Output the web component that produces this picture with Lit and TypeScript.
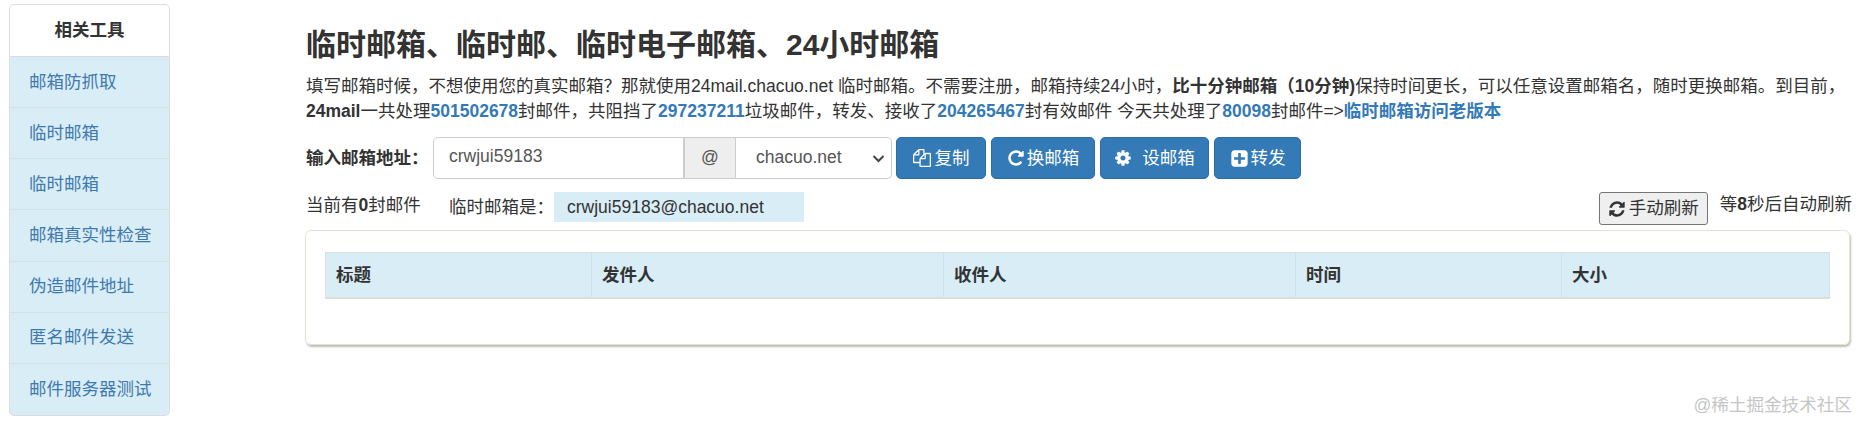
import { LitElement, html, css, svg } from "lit";
import { customElement } from "lit/decorators.js";

const icon = (d: string, cls = "ico") =>
  html`<svg class=${cls} viewBox="0 0 1792 1792" aria-hidden="true">${svg`<path fill="currentColor" d=${d}></path>`}</svg>`;

const filesD =
  "M1696 384q40 0 68 28t28 68v1216q0 40-28 68t-68 28h-960q-40 0-68-28t-28-68v-288h-544q-40 0-68-28t-28-68v-672q0-40 20-88t48-76l408-408q28-28 76-48t88-20h416q40 0 68 28t28 68v328q68-40 128-40h416zm-544 213l-299 299h299v-299zm-640-384l-299 299h299v-299zm196 647l316-316v-416h-384v416q0 40-28 68t-68 28h-416v640h512v-256q0-40 20-88t48-76zm956 804v-1152h-384v416q0 40-28 68t-68 28h-416v640h896z";
const repeatD =
  "M1664 256v448q0 26-19 45t-45 19h-448q-42 0-59-40-17-39 14-69l138-138q-148-137-349-137-104 0-198.5 40.5t-163.5 109.5-109.5 163.5-40.5 198.5 40.5 198.5 109.5 163.5 163.5 109.5 198.5 40.5q119 0 225-52t179-147q7-10 23-12 15 0 25 9l137 138q9 8 9.5 20.5t-7.5 22.5q-109 132-264 204.5t-327 72.5q-156 0-298-61t-245-164-164-245-61-298 61-298 164-245 245-164 298-61q147 0 284.5 55.5t244.5 156.5l130-129q29-31 70-14 39 17 39 59z";
const cogD =
  "M1152 896q0-106-75-181t-181-75-181 75-75 181 75 181 181 75 181-75 75-181zm512-109v222q0 12-8 23t-20 13l-185 28q-19 54-39 91 35 50 107 138 10 12 10 25t-9 23q-27 37-99 108t-94 71q-12 0-26-9l-138-108q-44 23-91 38-16 136-29 186-7 28-36 28h-222q-14 0-24.5-8.5t-11.5-21.5l-28-184q-49-16-90-37l-141 107q-10 9-25 9-14 0-25-11-126-114-165-168-7-10-7-23 0-12 8-23 15-21 51-66.5t54-70.5q-27-50-41-99l-183-27q-13-2-21-12.5t-8-23.5v-222q0-12 8-23t19-13l186-28q14-46 39-92-40-57-107-138-10-12-10-24 0-10 9-23 26-36 98.5-107.5t94.5-71.5q13 0 26 10l138 107q44-23 91-38 16-136 29-186 7-28 36-28h222q14 0 24.5 8.5t11.5 21.5l28 184q49 16 90 37l142-107q9-9 24-9 13 0 25 10 129 119 165 170 7 8 7 22 0 12-8 23-15 21-51 66.5t-54 70.5q26 50 41 98l183 28q13 2 21 12.5t8 23.5z";
const plusD =
  "M1408 960v-128q0-26-19-45t-45-19h-320v-320q0-26-19-45t-45-19h-128q-26 0-45 19t-19 45v320h-320q-26 0-45 19t-19 45v128q0 26 19 45t45 19h320v320q0 26 19 45t45 19h128q26 0 45-19t19-45v-320h320q26 0 45-19t19-45zm256-544v960q0 119-84.5 203.5t-203.5 84.5h-960q-119 0-203.5-84.5t-84.5-203.5v-960q0-119 84.5-203.5t203.5-84.5h960q119 0 203.5 84.5t84.5 203.5z";
const refreshD =
  "M1639 1056q0 5-1 7-64 268-268 434.5t-478 166.5q-146 0-282.5-55t-243.5-157l-129 129q-19 19-45 19t-45-19-19-45v-448q0-26 19-45t45-19h448q26 0 45 19t19 45-19 45l-137 137q71 66 161 102t187 36q134 0 250-65t186-179q11-17 53-117 8-23 30-23h192q13 0 22.5 9.5t9.5 22.5zm25-800v448q0 26-19 45t-45 19h-448q-26 0-45-19t-19-45 19-45l138-138q-148-137-349-137-134 0-250 65t-186 179q-11 17-53 117-8 23-30 23h-199q-13 0-22.5-9.5t-9.5-22.5v-7q65-268 270-434.5t480-166.5q146 0 284 55.5t245 156.5l130-129q19-19 45-19t45 19 19 45z";

const TOOLS = ["邮箱防抓取", "临时邮箱", "临时邮箱", "邮箱真实性检查", "伪造邮件地址", "匿名邮件发送", "邮件服务器测试"];
const COLUMNS = ["标题", "发件人", "收件人", "时间", "大小"];

@customElement("app-root")
export class AppRoot extends LitElement {
  static styles = css`
    :host {
      display: block;
      position: relative;
      width: 1859px;
      height: 421px;
      overflow: hidden;
      background: #fff;
      color: #333;
      font-family: "Liberation Sans", "Noto Sans CJK SC", sans-serif;
      font-size: 17.5px;
      line-height: 25px;
    }
    .page { display: flex; align-items: flex-start; padding: 4px 9px 0 9px; }
    .side {
      width: 161px;
      height: 412px;
      flex: none;
      box-sizing: border-box;
      display: grid;
      grid-template-rows: 52px repeat(7, 1fr);
      border: 1px solid #ddd;
      border-radius: 5px;
      overflow: hidden;
      background: #d9edf7;
    }
    .side-head {
      background: #fff;
      font-weight: 700;
      text-align: center;
      display: flex;
      align-items: center;
      justify-content: center;
      border-bottom: 1px solid #ddd;
    }
    .side-item {
      display: flex;
      align-items: center;
      padding-left: 19px;
      color: #4079ad;
      border-bottom: 1px solid #d3e2ea;
    }
    .side-item:last-child { border-bottom: 0; }
    .main { flex: 1; min-width: 0; margin-left: 136px; }
    h1 {
      margin: 0;
      padding-top: 21px;
      font-size: 30px;
      line-height: 40px;
      font-weight: 700;
      color: #333;
      white-space: nowrap;
    }
    .intro { margin: 9px 0 0; white-space: nowrap; }
    b { font-weight: 700; }
    .lnk { color: #337ab7; font-weight: 700; }
    .form { display: flex; align-items: stretch; height: 42px; margin-top: 13px; }
    .form-label { font-weight: 700; display: flex; align-items: center; width: 127px; flex: none; white-space: nowrap; }
    .input {
      width: 251px;
      box-sizing: border-box;
      border: 1px solid #ccc;
      border-radius: 5px 0 0 5px;
      padding: 0 15px 3px;
      display: flex;
      align-items: center;
      color: #555;
    }
    .at {
      width: 52px;
      box-sizing: border-box;
      background: #eee;
      border: 1px solid #ccc;
      display: flex;
      align-items: center;
      justify-content: center;
      color: #555;
      padding-bottom: 2px;
    }
    .sel {
      width: 156px;
      box-sizing: border-box;
      border: 1px solid #ccc;
      border-left: 0;
      border-radius: 0 5px 5px 0;
      padding: 0 6px 2px 20px;
      display: flex;
      align-items: center;
      justify-content: space-between;
      color: #555;
    }
    .chev { width: 13px; height: 9px; margin-top: 3px; }
    .btns { display: flex; gap: 5px; margin-left: 4px; }
    .btn {
      background: #337ab7;
      border: 1px solid #2e6da4;
      border-radius: 5px;
      color: #fff;
      display: flex;
      align-items: center;
      justify-content: center;
      box-sizing: border-box;
      white-space: nowrap;
    }
    .b1 { width: 90px; }
    .b2 { width: 104px; }
    .b3 { width: 109px; }
    .b4 { width: 87px; }
    .ico { width: 18px; height: 18px; flex: none; margin-right: 2px; }
    .ico.files { margin-right: 4px; }
    .ico.wide { margin-right: 10px; }
    .ico.plus { width: 19px; height: 19px; }
    .status { display: flex; align-items: flex-start; margin-top: 13px; height: 38px; }
    .count { width: 143px; flex: none; line-height: 25px; padding-top: 1px; }
    .cur { display: flex; align-items: center; height: 30px; white-space: nowrap; }
    .addr { width: 250px; height: 30px; padding-left: 13px; box-sizing: border-box; background: #d9edf7; display: flex; align-items: center; }
    .right { margin-left: auto; display: flex; align-items: flex-start; white-space: nowrap; margin-right: -2px; }
    .refresh {
      width: 109px;
      height: 33px;
      box-sizing: border-box;
      background: #efefef;
      border: 1px solid #767676;
      border-radius: 3px;
      display: flex;
      align-items: center;
      justify-content: center;
      color: #333;
      margin-right: 12px;
    }
    .refresh .ico { margin-right: 3px; }
    .wait { line-height: 25px; }
    .panel {
      width: 1545px;
      height: 115px;
      box-sizing: border-box;
      margin-left: -1px;
      padding: 21px 19px 0;
      border: 1px solid #e4e4d4;
      border-radius: 6px;
      box-shadow: 1px 2px 2px #bdbdb8;
    }
    .thead {
      display: grid;
      grid-template-columns: 266px 352px 352px 266px 1fr;
      height: 47px;
      background: #d9edf7;
      border: 1px solid #ddd;
      border-bottom: 2px solid #ddd;
      box-sizing: border-box;
      font-weight: 700;
    }
    .th { display: flex; align-items: center; padding-left: 10px; border-right: 1px solid #cfe0e8; }
    .th:last-child { border-right: 0; }
    .mark {
      position: absolute;
      right: 7px;
      bottom: 4px;
      color: #c6c6c6;
      font-size: 17.6px;
      line-height: 24px;
      white-space: nowrap;
    }
  `;

  render() {
    return html`
      <div class="page">
        <nav class="side">
          <div class="side-head">相关工具</div>
          ${TOOLS.map((t) => html`<div class="side-item">${t}</div>`)}
        </nav>
        <main class="main">
          <h1>临时邮箱、临时邮、临时电子邮箱、24小时邮箱</h1>
          <p class="intro">填写邮箱时候，不想使用您的真实邮箱？那就使用24mail.chacuo.net 临时邮箱。不需要注册，邮箱持续24小时，<b>比十分钟邮箱（10分钟)</b>保持时间更长，可以任意设置邮箱名，随时更换邮箱。到目前，<br /><b>24mail</b>一共处理<span class="lnk">501502678</span>封邮件，共阻挡了<span class="lnk">297237211</span>垃圾邮件，转发、接收了<span class="lnk">204265467</span>封有效邮件 今天共处理了<span class="lnk">80098</span>封邮件=&gt;<span class="lnk">临时邮箱访问老版本</span></p>
          <div class="form">
            <div class="form-label">输入邮箱地址：</div>
            <div class="input">crwjui59183</div>
            <div class="at">@</div>
            <div class="sel">chacuo.net
              <svg class="chev" viewBox="0 0 13 9" aria-hidden="true"><path d="M1.5 2 L6.5 7 L11.5 2" fill="none" stroke="#444" stroke-width="2"/></svg>
            </div>
            <div class="btns">
              <div class="btn b1">${icon(filesD, "ico files")}复制</div>
              <div class="btn b2">${icon(repeatD)}换邮箱</div>
              <div class="btn b3">${icon(cogD, "ico wide")}设邮箱</div>
              <div class="btn b4">${icon(plusD, "ico plus")}转发</div>
            </div>
          </div>
          <div class="status">
            <div class="count">当前有<b>0</b>封邮件</div>
            <div class="cur">临时邮箱是：<div class="addr">crwjui59183@chacuo.net</div></div>
            <div class="right">
              <div class="refresh">${icon(refreshD)}手动刷新</div>
              <div class="wait">等<b>8</b>秒后自动刷新</div>
            </div>
          </div>
          <section class="panel">
            <div class="thead">${COLUMNS.map((c) => html`<div class="th">${c}</div>`)}</div>
          </section>
        </main>
      </div>
      <div class="mark">@稀土掘金技术社区</div>
    `;
  }
}
